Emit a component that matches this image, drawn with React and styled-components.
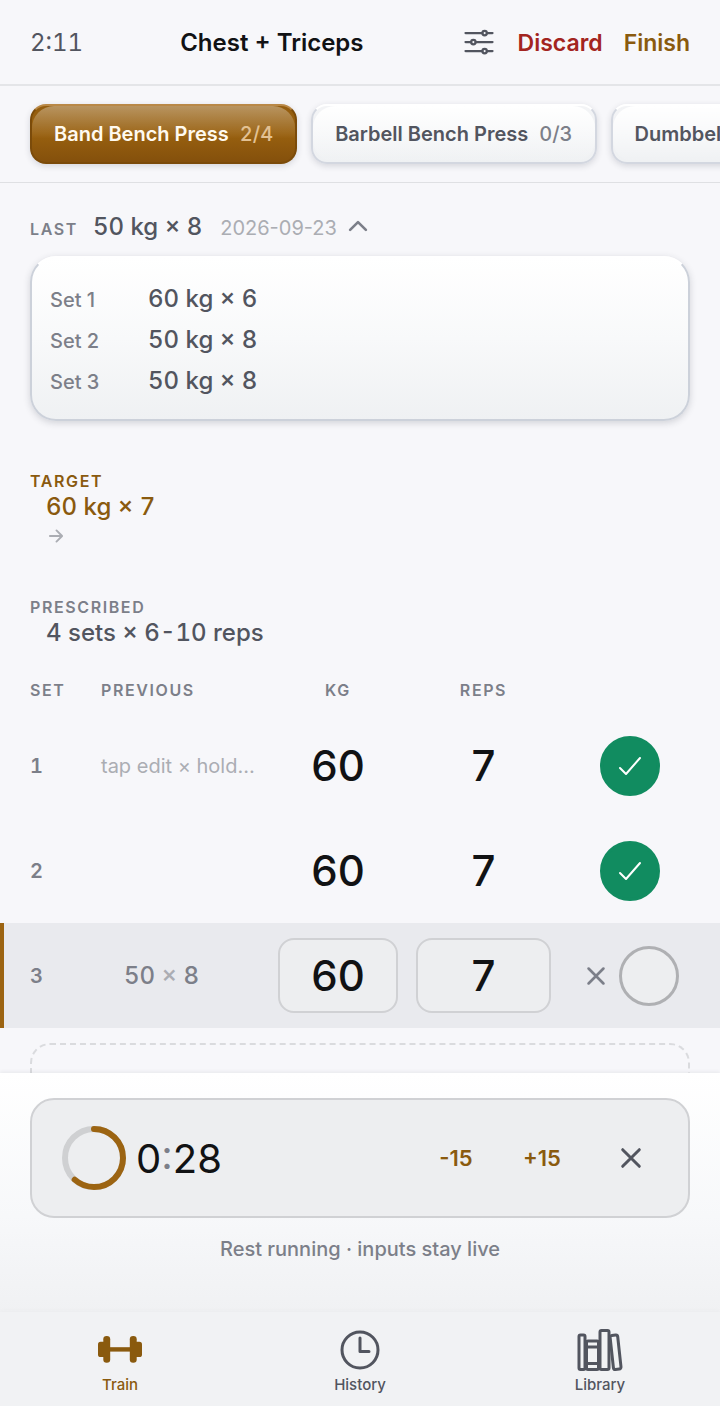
import React from 'react';
import styled, { createGlobalStyle, css } from 'styled-components';
import {
    IoOptionsOutline,
    IoChevronUpOutline,
    IoArrowForwardOutline,
    IoCheckmarkOutline,
    IoCloseOutline,
    IoTimeOutline,
    IoLibraryOutline
} from 'react-icons/io5';

const colors = {
    page: '#f7f7fa',
    ink: '#111214',
    text: '#52555f',
    muted: '#7c7f89',
    faint: '#abadb3',
    line: '#e4e5e8',
    amber: '#8a5a0e',
    amberBar: '#9c6412',
    red: '#a32420',
    green: '#118c60',
    field: '#edeef0'
};

const GlobalStyle = createGlobalStyle`
    * {
        box-sizing: border-box;
    }

    body {
        margin: 0;
        background: ${colors.page};
        color: ${colors.text};
        font-family: Inter, "Liberation Sans", sans-serif;
        -webkit-font-smoothing: antialiased;
    }

    button, input {
        font-family: inherit;
        margin: 0;
        padding: 0;
    }

    button {
        border: none;
        background: none;
        cursor: pointer;
    }
`;

const Screen = styled.div`
    display: flex;
    flex-direction: column;
    height: 100vh;
    overflow: hidden;
`;

const Header = styled.header`
    flex: none;
    display: flex;
    align-items: center;
    justify-content: space-between;
    padding: 22px 30px 20px;
    border-bottom: 2px solid ${colors.line};
    line-height: 42px;
`;

const Elapsed = styled.span`
    font-size: 24px;
    font-variant-numeric: tabular-nums;
`;

const Title = styled.h1`
    margin: 0;
    font-size: 24px;
    font-weight: 600;
    color: ${colors.ink};
`;

const HeaderActions = styled.div`
    display: flex;
    align-items: center;
    gap: 21px;
`;

const TextButton = styled.button`
    display: flex;
    align-items: center;
    font-size: 23px;
    font-weight: 600;
    color: ${props => props.$color};

    svg {
        margin-bottom: 2px;
    }
`;

const ChipRow = styled.nav`
    flex: none;
    display: flex;
    gap: 14px;
    padding: 18px 30px;
    overflow-x: auto;
    scrollbar-width: none;
    border-bottom: 1px solid #dfe0e3;
`;

const Chip = styled.button`
    position: relative;
    flex: none;
    display: flex;
    align-items: center;
    gap: 11px;
    height: 60px;
    padding: 0 22px;
    border: 2px solid #d3d7e0;
    border-top-color: #ffffff;
    border-radius: 16px;
    background: linear-gradient(#f3f4f6, #eff1f3);
    box-shadow: 0 2px 6px rgba(40, 45, 60, 0.16);
    font-size: 20px;
    font-weight: 600;
    color: ${colors.text};
    white-space: nowrap;

    /* glossy highlight, rounder than the chip itself */
    &::before {
        content: '';
        position: absolute;
        inset: 0;
        border-radius: 22px;
        background: linear-gradient(#ffffff, rgba(255, 255, 255, 0));
    }

    ${props => props.$active && css`
        border-color: #7b4b0a;
        border-top-color: #b98846;
        background: linear-gradient(#945d0e, #98600f 50%, #84500c);
        color: #fffaf0;

        &::before {
            background: linear-gradient(rgba(255, 255, 255, 0.34), rgba(255, 255, 255, 0) 58%);
        }
    `}
`;

const ChipLabel = styled.span`
    position: relative;
`;

const ChipCount = styled.span`
    position: relative;
    font-weight: 500;
    font-variant-numeric: tabular-nums;
    color: ${props => props.$active ? '#e2c194' : colors.muted};
`;

const Main = styled.main`
    flex: 1;
    min-height: 0;
    overflow: hidden;
`;

const Last = styled.section`
    padding: 29px 30px 0;
`;

const Caption = styled.span`
    display: block;
    font-size: 16px;
    font-weight: 600;
    line-height: 22px;
    letter-spacing: 0.1em;
    text-transform: uppercase;
    color: ${props => props.$color || colors.muted};
`;

const LastToggle = styled.button`
    display: flex;
    align-items: baseline;
    line-height: 30px;

    svg {
        align-self: center;
        margin-left: 7px;
        margin-bottom: 3px;
        color: ${colors.muted};
    }
`;

const Value = styled.span`
    font-size: 24px;
    font-weight: 500;
    font-variant-numeric: tabular-nums;
    color: ${props => props.$color || colors.text};
`;

const LastValue = styled(Value)`
    margin: 0 18px 0 15px;
`;

const LastDate = styled.span`
    font-size: 20px;
    color: ${colors.faint};
`;

const HistoryCard = styled.dl`
    margin: 13px 0 0;
    padding: 20px 18px 18px;
    border: 2px solid #ccd1da;
    border-top-color: #ffffff;
    border-radius: 26px;
    background: linear-gradient(#ffffff, #f8f9fa 50%, #eff1f3);
    box-shadow: 0 2px 7px rgba(40, 45, 60, 0.18);
`;

const HistoryRow = styled.div`
    display: grid;
    grid-template-columns: 98px 1fr;
    align-items: baseline;
    height: 41px;
    line-height: 41px;

    dt {
        font-size: 20px;
        font-weight: 500;
        color: ${colors.muted};
    }

    dd {
        margin: 0;
    }
`;

const Plan = styled.section`
    padding: 0 30px;
    margin-top: ${props => props.$gap}px;
`;

const PlanValue = styled(Value)`
    display: block;
    padding-left: 16px;
    line-height: 30px;
`;

const PlanTrend = styled.div`
    display: flex;
    align-items: center;
    height: 28px;
    padding-left: 16px;
    color: ${colors.faint};
`;

const SetTable = styled.table`
    width: 100%;
    margin-top: 19px;
    border-collapse: collapse;
    table-layout: fixed;
`;

const HeadCell = styled.th`
    width: ${props => props.$width};
    height: 46px;
    padding: 0 0 0 ${props => props.$indent || 0}px;
    text-align: ${props => props.$center ? 'center' : 'left'};
    font-size: 16px;
    font-weight: 600;
    letter-spacing: 0.1em;
    color: ${colors.muted};
`;

const SetRow = styled.tr`
    height: 105px;

    ${props => props.$current && css`
        background: #e9eaee;
        box-shadow: inset 4px 0 0 ${colors.amberBar};
    `}
`;

const NumberCell = styled.th`
    padding: 0 0 0 30px;
    text-align: left;
    font-size: 20px;
    font-weight: 600;
    font-variant-numeric: tabular-nums;
    color: ${colors.muted};
`;

const PreviousCell = styled.td`
    padding: 0;
`;

const Hint = styled.span`
    font-size: 20px;
    color: ${colors.faint};
    white-space: nowrap;
`;

const PreviousButton = styled.button`
    width: 121px;
    font-size: 24px;
    font-weight: 500;
    font-variant-numeric: tabular-nums;
    color: ${colors.muted};

    span {
        color: ${colors.faint};
    }
`;

const AmountCell = styled.td`
    padding: 0 9px;
    text-align: center;
    font-size: 42px;
    font-weight: 500;
    color: ${colors.ink};
`;

const AmountInput = styled.input`
    display: block;
    width: 100%;
    height: 75px;
    border: 2px solid #d0d1d4;
    border-radius: 16px;
    background: ${colors.field};
    text-align: center;
    font-size: 42px;
    font-weight: 500;
    color: ${colors.ink};
`;

const ActionCell = styled.td`
    padding: 0 20px 0 0;
`;

const RowActions = styled.div`
    display: flex;
    align-items: center;
    justify-content: center;
    gap: 8px;
`;

const CloseIcon = styled(IoCloseOutline)`
    flex: none;

    path {
        stroke-width: 40px;
    }
`;

const RemoveButton = styled.button`
    display: flex;
    align-items: center;
    justify-content: center;
    width: 30px;
    height: 60px;
    color: ${colors.muted};
`;

const CheckButton = styled.button`
    display: flex;
    align-items: center;
    justify-content: center;
    width: 60px;
    height: 60px;
    border-radius: 50%;
    border: 3px solid ${props => props.$done ? colors.green : '#afb0b3'};
    background: ${props => props.$done ? colors.green : colors.field};
    color: #ffffff;
`;

const AddSet = styled.button`
    display: block;
    width: calc(100% - 60px);
    height: 75px;
    margin: 15px 30px 0;
    border: 2px dashed #dadbde;
    border-radius: 20px;
    font-size: 20px;
    color: ${colors.muted};
`;

const Dock = styled.section`
    position: relative;
    flex: none;
    padding: 25px 30px 48px;
    background: linear-gradient(#ffffff, #f7f8fa 60%, #f0f1f3);
    box-shadow: 0 -1px 4px rgba(40, 45, 60, 0.08);
`;

const RestTimer = styled.div`
    display: flex;
    align-items: center;
    height: 120px;
    padding: 0 15px 0 30px;
    border: 2px solid #d0d1d4;
    border-radius: 24px;
    background: ${colors.field};
`;

const Countdown = styled.span`
    flex: 1;
    margin-left: 10px;
    font-size: 40px;
    font-weight: 400;
    color: ${colors.ink};

    span {
        color: ${colors.muted};
    }
`;

const TimerActions = styled.div`
    display: flex;
    gap: 8px;
`;

const TimerButton = styled.button`
    display: flex;
    align-items: center;
    justify-content: center;
    width: ${props => props.$wide ? 84 : 78}px;
    height: 60px;
    font-size: 22px;
    font-weight: 600;
    color: ${props => props.$color};
`;

const DockNote = styled.p`
    margin: 16px 0 0;
    text-align: center;
    font-size: 20px;
    font-weight: 500;
    line-height: 30px;
    color: ${colors.muted};
`;

const TabBar = styled.nav`
    flex: none;
    display: grid;
    grid-template-columns: repeat(3, 1fr);
    position: relative;
    padding: 14px 0 10px;
    background: #f1f2f4;
    box-shadow: 0 -2px 4px rgba(40, 45, 60, 0.02);
`;

const Tab = styled.a`
    display: flex;
    flex-direction: column;
    align-items: center;
    text-decoration: none;
    font-size: 15px;
    font-weight: 500;
    line-height: 22px;
    color: ${props => props.$active ? colors.amber : colors.text};
`;

const BarbellIcon = ({ size }) => (
    <svg width={size} height={size} viewBox="0 0 48 48" fill="currentColor" aria-hidden="true">
        <rect x="2" y="15.7" width="8" height="15.3" rx="2.6" />
        <rect x="7.3" y="10" width="6.9" height="26.7" rx="3.3" />
        <rect x="13" y="21.2" width="22" height="4.4" />
        <rect x="33.8" y="10" width="6.9" height="26.7" rx="3.3" />
        <rect x="38" y="15.7" width="8" height="15.3" rx="2.6" />
    </svg>
);

const exercises = [
    { name: 'Band Bench Press', count: '2/4', active: true },
    { name: 'Barbell Bench Press', count: '0/3' },
    { name: 'Dumbbell Fly', count: '0/3' }
];

const lastSets = ['60 kg × 6', '50 kg × 8', '50 kg × 8'];

const tabs = [
    { name: 'Train', Icon: BarbellIcon, active: true },
    { name: 'History', Icon: IoTimeOutline },
    { name: 'Library', Icon: IoLibraryOutline }
];

const Ring = ({ progress }) => {
    const radius = 29;
    const length = 2 * Math.PI * radius;
    return (
        <svg width="64" height="64" viewBox="0 0 64 64" fill="none" strokeWidth="6" aria-hidden="true">
            <circle cx="32" cy="32" r={radius} stroke="#cfd0d2" />
            <circle
                cx="32"
                cy="32"
                r={radius}
                stroke={colors.amberBar}
                strokeLinecap="round"
                strokeDasharray={`${length * progress} ${length}`}
                transform="rotate(-90 32 32)"
            />
        </svg>
    );
};

const DoneRow = ({ number, hint, kg, reps }) => (
    <SetRow>
        <NumberCell scope="row">{number}</NumberCell>
        <PreviousCell>{hint && <Hint>{hint}</Hint>}</PreviousCell>
        <AmountCell>{kg}</AmountCell>
        <AmountCell>{reps}</AmountCell>
        <ActionCell>
            <RowActions>
                <CheckButton $done aria-label={`Set ${number} done`}>
                    <IoCheckmarkOutline size={32} />
                </CheckButton>
            </RowActions>
        </ActionCell>
    </SetRow>
);

export default function App() {
    return (
        <Screen>
            <GlobalStyle />
            <Header>
                <Elapsed>2:11</Elapsed>
                <Title>Chest + Triceps</Title>
                <HeaderActions>
                    <TextButton $color={colors.text} aria-label="Options">
                        <IoOptionsOutline size={36} />
                    </TextButton>
                    <TextButton $color={colors.red}>Discard</TextButton>
                    <TextButton $color={colors.amber}>Finish</TextButton>
                </HeaderActions>
            </Header>

            <ChipRow>
                {exercises.map((item) =>
                    <Chip key={item.name} $active={item.active}>
                        <ChipLabel>{item.name}</ChipLabel>
                        <ChipCount $active={item.active}>{item.count}</ChipCount>
                    </Chip>
                )}
            </ChipRow>

            <Main>
                <Last>
                    <LastToggle aria-expanded="true">
                        <Caption>Last</Caption>
                        <LastValue>50 kg × 8</LastValue>
                        <LastDate>2026-09-23</LastDate>
                        <IoChevronUpOutline size={28} />
                    </LastToggle>
                    <HistoryCard>
                        {lastSets.map((item, indx) =>
                            <HistoryRow key={'set' + indx}>
                                <dt>Set {indx + 1}</dt>
                                <Value as="dd">{item}</Value>
                            </HistoryRow>
                        )}
                    </HistoryCard>
                </Last>

                <Plan $gap={49}>
                    <Caption $color={colors.amber}>Target</Caption>
                    <PlanValue $color={colors.amber}>60 kg × 7</PlanValue>
                    <PlanTrend>
                        <IoArrowForwardOutline size={20} />
                    </PlanTrend>
                </Plan>

                <Plan $gap={46}>
                    <Caption>Prescribed</Caption>
                    <PlanValue>4 sets × 6-10 reps</PlanValue>
                </Plan>

                <SetTable>
                    <thead>
                        <tr>
                            <HeadCell scope="col" $width="101px" $indent={30}>SET</HeadCell>
                            <HeadCell scope="col" $width="auto">PREVIOUS</HeadCell>
                            <HeadCell scope="col" $width="138px" $center>KG</HeadCell>
                            <HeadCell scope="col" $width="153px" $center>REPS</HeadCell>
                            <HeadCell scope="col" $width="160px" aria-label="Done" />
                        </tr>
                    </thead>
                    <tbody>
                        <DoneRow number={1} hint="tap edit × hold…" kg={60} reps={7} />
                        <DoneRow number={2} kg={60} reps={7} />
                        <SetRow $current>
                            <NumberCell scope="row">3</NumberCell>
                            <PreviousCell>
                                <PreviousButton>50 <span>×</span> 8</PreviousButton>
                            </PreviousCell>
                            <AmountCell>
                                <AmountInput aria-label="Set 3 kg" inputMode="decimal" defaultValue="60" />
                            </AmountCell>
                            <AmountCell>
                                <AmountInput aria-label="Set 3 reps" inputMode="numeric" defaultValue="7" />
                            </AmountCell>
                            <ActionCell>
                                <RowActions>
                                    <RemoveButton aria-label="Remove set 3">
                                        <CloseIcon size={34} />
                                    </RemoveButton>
                                    <CheckButton aria-label="Complete set 3" />
                                </RowActions>
                            </ActionCell>
                        </SetRow>
                    </tbody>
                </SetTable>
                <AddSet aria-label="Add set" />
            </Main>

            <Dock>
                <RestTimer>
                    <Ring progress={0.615} />
                    <Countdown>0<span>:</span>28</Countdown>
                    <TimerActions>
                        <TimerButton $color={colors.amber}>-15</TimerButton>
                        <TimerButton $color={colors.amber}>+15</TimerButton>
                        <TimerButton $color={colors.text} $wide aria-label="Stop rest">
                            <CloseIcon size={38} />
                        </TimerButton>
                    </TimerActions>
                </RestTimer>
                <DockNote>Rest running · inputs stay live</DockNote>
            </Dock>

            <TabBar>
                {tabs.map(({ name, Icon, active }) =>
                    <Tab key={name} href={'#' + name.toLowerCase()} $active={active}>
                        <Icon size={48} />
                        {name}
                    </Tab>
                )}
            </TabBar>
        </Screen>
    );
}
